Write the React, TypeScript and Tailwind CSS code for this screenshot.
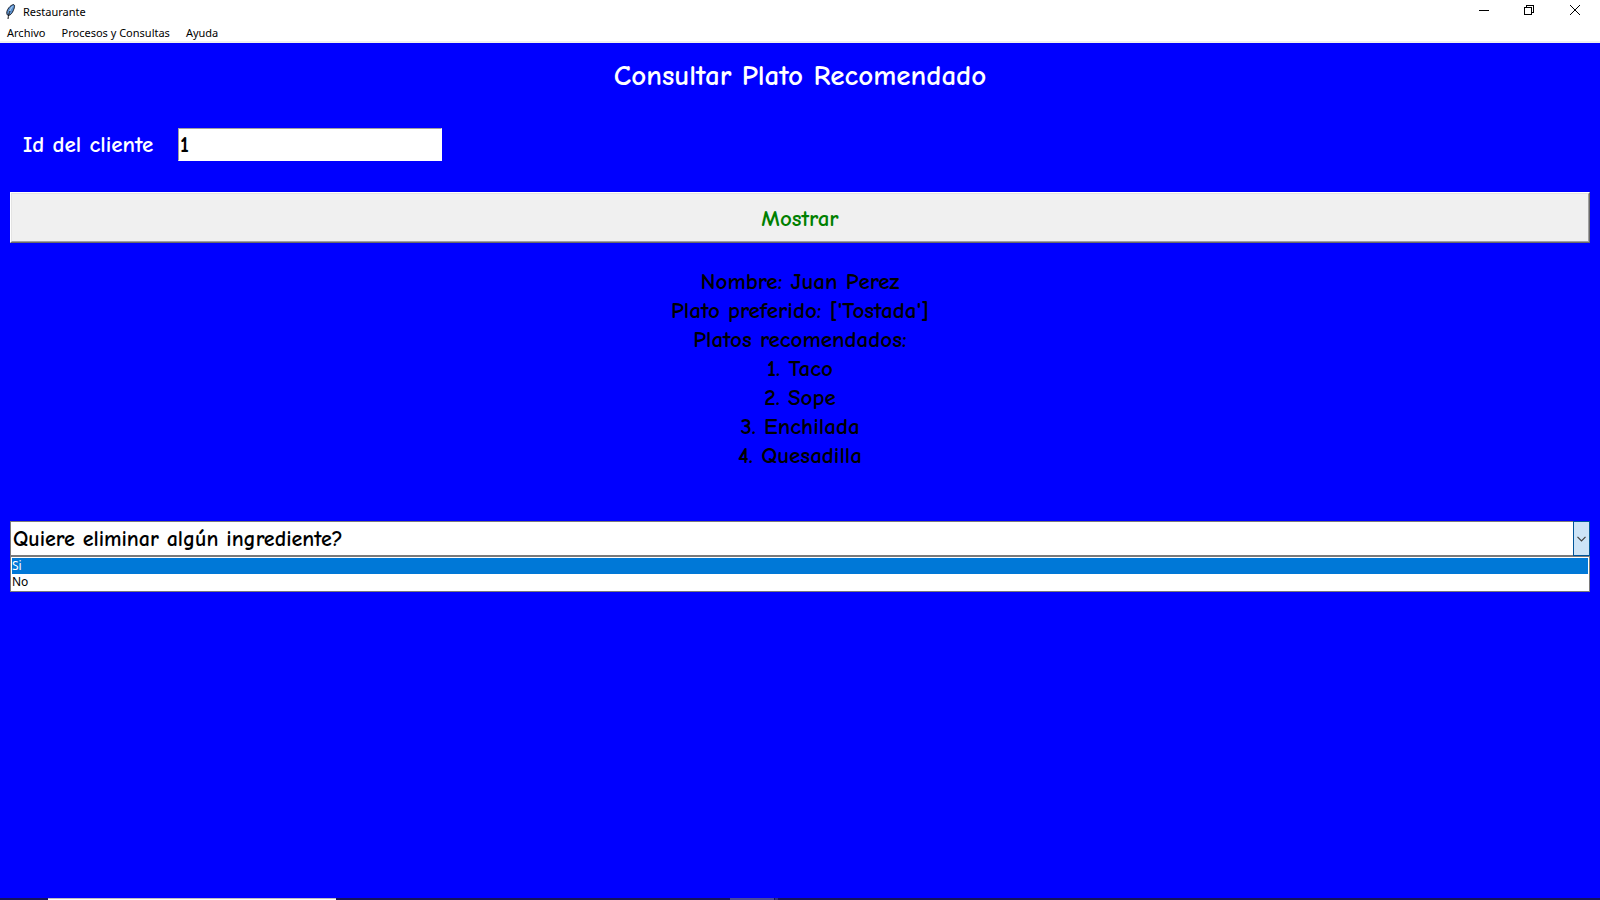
import { useState } from "react";

const MENUS = ["Archivo", "Procesos y Consultas", "Ayuda"];
const RESULT_LINES = [
  "Nombre: Juan Perez",
  "Plato preferido: ['Tostada']",
  "Platos recomendados:",
  "1. Taco",
  "2. Sope",
  "3. Enchilada",
  "4. Quesadilla",
];
const PROMPT = "Quiere eliminar algún ingrediente?";
const OPTIONS = ["Si", "No"];

function FeatherIcon() {
  return (
    <svg width="16" height="16" viewBox="0 0 16 16" aria-hidden="true">
      <path d="M11.8 0.6C13 1 12.6 3.4 11.8 5.2 11 7.4 10 9.6 8.2 10.8L6.6 11.4 5.2 10.8C4.2 8.8 5 6 6.8 3.8 8.2 2 10.2 0.6 11.8 0.6Z" fill="#5b93d3" stroke="#1a1f29" />
      <path d="M10.6 2.4C9 4.2 7.6 6.6 7 9.4" stroke="#c3dcf5" fill="none" />
      <path d="M8 7C7 9 6.4 11.6 6 15" stroke="#111" fill="none" />
    </svg>
  );
}

function TitleBar() {
  return (
    <div className="flex h-[22px] items-start justify-between">
      <div className="flex items-center gap-[5px] pl-0.5 pt-[3px]">
        <FeatherIcon />
        <span className="text-[11px] leading-[18px]">Restaurante</span>
      </div>
      <div className="flex pr-px">
        <button aria-label="Minimizar" className="flex h-5 w-[46px] items-center justify-center">
          <svg width="10" height="10" viewBox="0 0 10 10" shapeRendering="crispEdges">
            <path d="M0 5.5H10" stroke="#000" />
          </svg>
        </button>
        <button aria-label="Restaurar" className="flex h-5 w-11 items-center justify-center">
          <svg width="10" height="10" viewBox="0 0 10 10" fill="none" stroke="#000" shapeRendering="crispEdges">
            <path d="M0.5 2.5H7.5V9.5H0.5Z" />
            <path d="M2.5 2.5V0.5H9.5V7.5H7.5" />
          </svg>
        </button>
        <button aria-label="Cerrar" className="flex h-5 w-12 items-center justify-center">
          <svg width="10" height="10" viewBox="0 0 10 10" stroke="#000">
            <path d="M0 0L10 10M10 0L0 10" />
          </svg>
        </button>
      </div>
    </div>
  );
}

function MenuBar() {
  return (
    <nav className="flex h-[21px] items-end gap-4 border-b-2 border-[#f0f0f0] px-[7px]">
      {MENUS.map((menu) => (
        <button key={menu} className="text-[11px] leading-4">
          {menu}
        </button>
      ))}
    </nav>
  );
}

function IngredientCombo() {
  const [value, setValue] = useState(PROMPT);
  const [active, setActive] = useState(OPTIONS[0]);
  return (
    <div className="relative">
      <div className="relative flex">
        <select
          aria-label={PROMPT}
          value={value}
          onChange={(e) => setValue(e.target.value)}
          className="h-[35px] w-full appearance-none border border-[#7a7a7a] bg-white pl-0.5 pr-5 pt-px text-[22px] leading-[29px] text-black outline-none"
        >
          <option>{PROMPT}</option>
          {OPTIONS.map((option) => (
            <option key={option}>{option}</option>
          ))}
        </select>
        <span className="pointer-events-none absolute inset-y-0 right-0 flex w-[17px] items-center justify-center border border-[#005499] bg-[#cce4f7]">
          <svg width="9" height="6" viewBox="0 0 9 6" fill="none" stroke="#404040" strokeWidth="1.2">
            <path d="M0.5 0.8L4.5 4.8L8.5 0.8" />
          </svg>
        </span>
      </div>
      <ul
        role="listbox"
        aria-label="Opciones"
        className="absolute inset-x-0 top-full border border-[#7a7a7a] bg-white p-px font-['Noto_Sans','Open_Sans',sans-serif] text-xs font-normal leading-4"
      >
        {OPTIONS.map((option) => (
          <li
            key={option}
            role="option"
            aria-selected={option === active}
            onMouseEnter={() => setActive(option)}
            onClick={() => setValue(option)}
            className={option === active ? "bg-[#0078d7] text-white" : "text-black"}
          >
            {option}
          </li>
        ))}
      </ul>
    </div>
  );
}

function TaskbarEdge() {
  return (
    <div className="flex h-0.5 bg-[#14145a]">
      <div className="ml-12 h-0.5 w-72 border-t border-[#bdbdbd] bg-white" />
      <div className="ml-[394px] h-0.5 w-11 bg-[#4a4a9a]" />
      <div className="ml-px h-0.5 w-[3px] bg-[#33337a]" />
    </div>
  );
}

export default function App() {
  const [clientId, setClientId] = useState("1");
  return (
    <div className="flex min-h-screen flex-col bg-[#0000ff] font-['Noto_Sans','Open_Sans',sans-serif] text-black">
      <header className="bg-white">
        <TitleBar />
        <MenuBar />
      </header>
      <main className="flex flex-1 flex-col px-2.5 pt-3.5 font-['Comic_Sans_MS','Comic_Neue','Open_Sans',sans-serif] text-[23px] font-bold leading-[29px]">
        <h1 className="text-center text-[29px] leading-[38px] text-white">Consultar Plato Recomendado</h1>
        <div className="mt-[33px] flex items-center">
          <label htmlFor="client-id" className="w-[168px] pl-[13px] text-white">
            Id del cliente
          </label>
          <input
            id="client-id"
            value={clientId}
            onChange={(e) => setClientId(e.target.value)}
            className="h-[33px] w-[264px] border border-b-white border-l-[#a0a0a0] border-r-white border-t-[#a0a0a0] bg-white px-px text-black outline-none"
          />
        </div>
        <button className="mt-[31px] border border-b-[#696969] border-l-white border-r-[#696969] border-t-white text-[#008000]">
          <span className="block border border-b-[#a0a0a0] border-l-[#e3e3e3] border-r-[#a0a0a0] border-t-[#e3e3e3] bg-[#f0f0f0] pb-2 pt-2.5">
            Mostrar
          </span>
        </button>
        <div className="mb-[51px] mt-6 text-center">
          {RESULT_LINES.map((line) => (
            <p key={line}>{line}</p>
          ))}
        </div>
        <IngredientCombo />
      </main>
      <TaskbarEdge />
    </div>
  );
}
